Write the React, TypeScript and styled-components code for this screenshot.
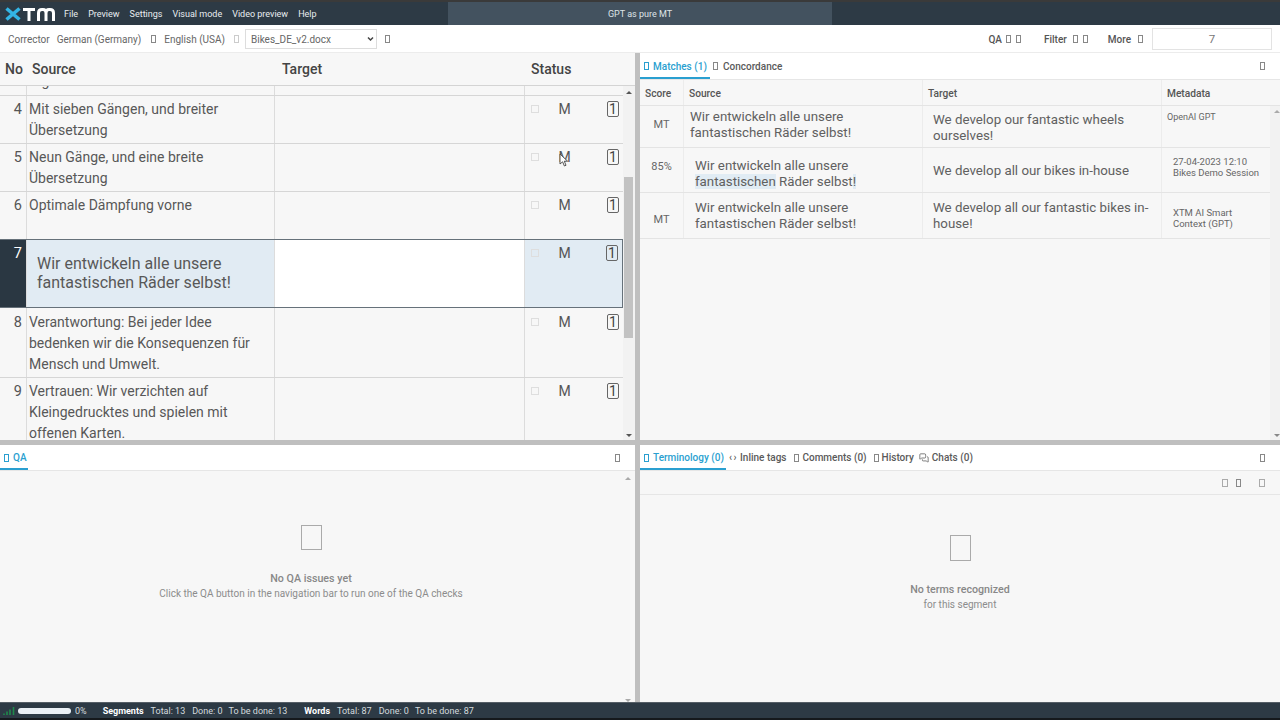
import React from "react";
import styled, { createGlobalStyle } from "styled-components";
import { MessagesSquare } from "lucide-react";

const Global = createGlobalStyle`
  html, body { margin: 0; padding: 0; width: 1280px; height: 720px; overflow: hidden; background: #f7f7f7; }
  body { font-family: Roboto, "Liberation Sans", sans-serif; color: #555; }
  * { box-sizing: border-box; }
`;

const Page = styled.div`
  width: 1280px; height: 720px; display: flex; flex-direction: column; overflow: hidden;
`;

const TopBar = styled.header`
  height: 25px; flex: none; background: #2d3a45; border-top: 2px solid #3a3a3a;
  display: grid; grid-template-columns: 448px 384px 1fr; align-items: stretch;
`;
const BrandMenu = styled.div`display: flex; align-items: center; padding-left: 5px;`;
const Logo = styled.svg`width: 50px; height: 14px; flex: none; margin-right: 9px;`;
const MenuItem = styled.span`
  font-size: 9px; color: #e9edf0; margin-right: 10px; white-space: nowrap;
`;
const DocTitle = styled.div`
  background: #43525f; color: #dfe4e8; font-size: 9px;
  display: flex; align-items: center; justify-content: center;
`;

const Toolbar = styled.div`
  height: 28px; flex: none; background: #fff; border-bottom: 1px solid #ececec;
  display: flex; align-items: center; padding: 1px 8px 0; font-size: 10px;
`;
const ToolText = styled.span<{ $ml?: number }>`
  color: #666; margin-left: ${(p) => p.$ml ?? 0}px; white-space: nowrap;
`;
const ToolAction = styled.span<{ $ml?: number }>`
  color: #555; font-weight: 500; margin-left: ${(p) => p.$ml ?? 0}px; white-space: nowrap;
`;
const Tofu = styled.span<{ $w?: number; $h?: number; $ml?: number; $c?: string }>`
  display: inline-block; flex: none;
  width: ${(p) => p.$w ?? 5}px; height: ${(p) => p.$h ?? 8}px;
  margin-left: ${(p) => p.$ml ?? 0}px;
  border: 1px solid ${(p) => p.$c ?? "#888"};
`;
const SelectWrap = styled.div`position: relative; width: 132px; height: 20px; margin-left: 6px; flex: none;`;
const FileSelect = styled.select`
  appearance: none; width: 100%; height: 100%; border: 1px solid #ddd; background: #fff;
  font: 400 10px Roboto, sans-serif; color: #666; padding-left: 5px; border-radius: 0;
`;
const Chevron = styled.svg`position: absolute; right: 3px; top: 7px; width: 7px; height: 6px; pointer-events: none;`;
const Spacer = styled.div`flex: 1;`;
const SegmentInput = styled.div`
  width: 120px; height: 22px; margin-left: 9px; border: 1px solid #e3e3e3; background: #fff;
  color: #777; font-size: 11.5px; display: flex; align-items: center; justify-content: center;
`;

const Workspace = styled.main`
  flex: 1; min-height: 0; display: grid;
  grid-template-columns: 635px 5px 1fr; grid-template-rows: 387px 5px 1fr;
  background: #bdbdbd;
`;
const Pane = styled.section`
  background: #f7f7f7; min-width: 0; min-height: 0; display: flex; flex-direction: column; overflow: hidden;
`;
const Gutter = styled.div`background: #bfbfbf;`;

const SegHeader = styled.div`
  height: 33px; flex: none; display: grid; grid-template-columns: 27px 248px 250px 1fr;
  align-items: center; border-bottom: 1px solid #d4d4d4; font-size: 14px; font-weight: 500; color: #444;
  background: #f7f7f7;
`;
const SegHeadCell = styled.div<{ $pl: number }>`padding-left: ${(p) => p.$pl}px;`;

const ScrollFrame = styled.div`flex: 1; min-height: 0; display: flex; overflow: hidden;`;
const SegList = styled.div`width: 623px; flex: none; display: flex; flex-direction: column;`;
const Row = styled.div<{ $h: number; $active?: boolean }>`
  height: ${(p) => p.$h}px; flex: none; display: grid;
  grid-template-columns: 27px 248px 250px 1fr; overflow: hidden;
  border-bottom: 1px solid ${(p) => (p.$active ? "#66717a" : "#d6d6d6")};
  ${(p) => p.$active && "border-top: 1px solid #66717a; border-right: 1px solid #66717a; margin-top: -1px;"}
`;
const NoCell = styled.div<{ $active?: boolean; $nudge?: number }>`
  font-size: 14.5px; line-height: 21px; padding: ${(p) => 3 + (p.$nudge ?? 0)}px 4px 0 0; text-align: right;
  color: ${(p) => (p.$active ? "#fff" : "#555")};
  background: ${(p) => (p.$active ? "#2a3742" : "transparent")};
  border-right: 1px solid #dcdcdc;
`;
const SourceCell = styled.div<{ $active?: boolean; $nudge?: number }>`
  font-size: ${(p) => (p.$active ? 16 : 14)}px;
  line-height: ${(p) => (p.$active ? 19 : 21)}px;
  padding: ${(p) => (p.$active ? "14px 8px 0 10px" : `${3 + (p.$nudge ?? 0)}px 8px 0 2px`)};
  color: #585858;
  background: ${(p) => (p.$active ? "#e1ebf3" : "transparent")};
  border-right: 1px solid #dcdcdc;
`;
const ClipCell = styled.div`
  padding-left: 2px; border-right: 1px solid #dcdcdc;
`;
const ClippedSource = styled.div`
  font-size: 14px; line-height: 21px; margin-top: -15px; color: #585858;
`;
const TargetCell = styled.div<{ $active?: boolean }>`
  background: ${(p) => (p.$active ? "#fff" : "transparent")};
  border-right: 1px solid #dcdcdc;
`;
const StatusCell = styled.div<{ $active?: boolean; $nudge?: number }>`
  position: relative; display: grid; grid-template-columns: 22px 33px 1fr 16px; align-items: start;
  padding: ${(p) => 5 + (p.$nudge ?? 0)}px 0 0 6px; background: ${(p) => (p.$active ? "#e1ebf3" : "transparent")};
`;
const CheckBox = styled.span`
  width: 8px; height: 8px; margin-top: 4px; border: 1px solid #dedede; display: block;
`;
const MLetter = styled.span`font-size: 14px; line-height: 17px; color: #555; text-align: center; width: 15px; margin-left: 4px;`;
const CountBadge = styled.span`
  grid-column: 4; width: 12px; height: 16px; border: 1px solid #666; border-radius: 2px;
  font-size: 14px; line-height: 14px; text-align: center; color: #444;
`;
const Cursor = styled.svg`position: absolute; left: 34px; top: 9px; width: 10px; height: 15px;`;

const ScrollTrack = styled.div<{ $plain?: boolean }>`
  flex: 1; position: relative; background: ${(p) => (p.$plain ? "transparent" : "#f2f2f2")};
`;
const Thumb = styled.div`
  position: absolute; left: 1px; top: 91px; width: 9px; height: 161px; background: #c2c2c2;
`;
const Arrow = styled.span<{ $down?: boolean; $top?: number; $bottom?: number; $x: number; $c?: string }>`
  position: absolute; left: ${(p) => p.$x}px;
  ${(p) => (p.$top !== undefined ? `top: ${p.$top}px;` : "")}
  ${(p) => (p.$bottom !== undefined ? `bottom: ${p.$bottom}px;` : "")}
  width: 0; height: 0; border-left: 3px solid transparent; border-right: 3px solid transparent;
  ${(p) => (p.$down ? `border-top: 3px solid ${p.$c ?? "#555"};` : `border-bottom: 3px solid ${p.$c ?? "#555"};`)}
`;

const TabBar = styled.div<{ $h: number }>`
  height: ${(p) => p.$h}px; flex: none; display: flex; align-items: stretch; background: #fff;
  border-bottom: 1px solid #e6e6e6; padding-right: 15px; font-size: 10px;
`;
const Tab = styled.div<{ $active?: boolean; $w?: number; $ml?: number; $gap?: number }>`
  display: flex; align-items: center; gap: ${(p) => p.$gap ?? (p.$active ? 4 : 3)}px; padding-left: ${(p) => (p.$active ? 4 : 0)}px;
  ${(p) => p.$w && `width: ${p.$w}px;`}
  margin-left: ${(p) => p.$ml ?? 0}px; white-space: nowrap;
  color: ${(p) => (p.$active ? "#2a9fd0" : "#5a5a5a")}; font-weight: 500;
  box-shadow: ${(p) => (p.$active ? "inset 0 -2px 0 #2a9fd0" : "none")};
`;
const Brace = styled.span`font-size: 10px; width: 8px; letter-spacing: 1.5px; display: inline-block;`;
const TabEnd = styled.div`margin-left: auto; display: flex; align-items: center;`;

const MatchHead = styled.div`
  height: 26px; flex: none; display: grid; grid-template-columns: 44px 239px 239px 119px;
  border-bottom: 1px solid #e4e4e4; font-size: 10.2px; font-weight: 500; color: #555;
`;
const MatchHeadCell = styled.div`
  padding: 1px 0 0 5px; display: flex; align-items: center; border-right: 1px solid #ececec;
  &:last-child { border-right: none; }
`;
const MatchesFrame = styled.div`flex: 1; display: flex; min-height: 0;`;
const MatchesList = styled.div`width: 630px; flex: none;`;
const MatchRow = styled.div<{ $h: number }>`
  height: ${(p) => p.$h}px; display: grid; grid-template-columns: 44px 239px 239px 108px;
  border-bottom: 1px solid #e4e4e4; font-size: 13.3px; line-height: 16px; color: #606060;
`;
const ScoreCell = styled.div<{ $dy: number }>`
  display: flex; align-items: center; justify-content: center; font-size: 11px; color: #666;
  border-right: 1px solid #ececec;
  padding-bottom: ${(p) => (p.$dy < 0 ? -2 * p.$dy : 0)}px;
  padding-top: ${(p) => (p.$dy > 0 ? 2 * p.$dy : 0)}px;
`;
const TextCell = styled.div<{ $pl: number; $pt: number; $center?: boolean }>`
  padding: ${(p) => p.$pt}px 6px 0 ${(p) => p.$pl}px; border-right: 1px solid #ececec;
  ${(p) => p.$center && "display: flex; align-items: center;"}
`;
const MetaCell = styled.div<{ $pl: number; $pt: number; $small?: boolean }>`
  padding: ${(p) => p.$pt}px 0 0 ${(p) => p.$pl}px;
  font-size: ${(p) => (p.$small ? 9 : 9.5)}px; line-height: 11px; color: #666;
`;
const Mark = styled.span`background: #e1ecf4;`;

const EmptyBody = styled.div`flex: 1; min-height: 0; position: relative; display: flex; flex-direction: column; align-items: center;`;
const BigIcon = styled.span<{ $w: number; $h: number; $mt: number }>`
  display: block; width: ${(p) => p.$w}px; height: ${(p) => p.$h}px; margin-top: ${(p) => p.$mt}px;
  border: 1px solid #aaa;
`;
const EmptyTitle = styled.div`
  margin-top: 22px; font-size: 10.7px; font-weight: 500; line-height: 13px; color: #888;
`;
const EmptySub = styled.div`margin-top: 2px; font-size: 10px; line-height: 13px; color: #8c8c8c;`;
const SubBar = styled.div`
  height: 24px; flex: none; border-bottom: 1px solid #e6e6e6; display: flex; align-items: center;
  justify-content: flex-end; padding-right: 15px;
`;
const LeftScroll = styled.div`width: 13px; flex: none; display: flex;`;

const StatusBar = styled.footer`
  height: 18px; flex: none; background: #2d3a45; border-bottom: 2px solid #15191d; border-top: 1px solid #555e66;
  display: flex; align-items: center; padding-left: 3px; font-size: 9px; color: #d5dade; white-space: nowrap;
`;
const Signal = styled.svg`width: 12px; height: 9px; flex: none;`;
const Progress = styled.div`width: 53px; height: 6px; border-radius: 3px; background: #eaf0f5; margin-left: 3px;`;
const Stat = styled.span<{ $ml: number }>`margin-left: ${(p) => p.$ml}px;`;
const StatLabel = styled.strong<{ $ml: number }>`margin-left: ${(p) => p.$ml}px; color: #fff; font-weight: 700;`;
const ChatGlyph = styled(MessagesSquare)`width: 10px; height: 10px; flex: none; color: #666;`;

const segs = [
  { no: 4, h: 48, text: "Mit sieben Gängen, und breiter Übersetzung" },
  { no: 5, h: 48, text: "Neun Gänge, und eine breite Übersetzung", cursor: true },
  { no: 6, h: 48, text: "Optimale Dämpfung vorne" },
  { no: 7, h: 69, text: "Wir entwickeln alle unsere fantastischen Räder selbst!", active: true },
  { no: 8, h: 70, nudge: 1, text: "Verantwortung: Bei jeder Idee bedenken wir die Konsequenzen für Mensch und Umwelt." },
  { no: 9, h: 69, text: "Vertrauen: Wir verzichten auf Kleingedrucktes und spielen mit offenen Karten." },
];

export default function App() {
  return (
    <Page>
      <Global />
      <TopBar>
        <BrandMenu>
          <Logo viewBox="0 0 50 14" fill="none">
            <path d="M1.5 1.5 L14.5 12.5 M14.5 1.5 L1.5 12.5" stroke="#33b5e5" strokeWidth="3.6" />
            <path d="M18 2.5 H30 M24 2.5 V14" stroke="#fff" strokeWidth="3" />
            <path d="M33.5 14 V6 Q33.5 2.5 37 2.5 H38 Q41 2.5 41 6 V14 M41 6 Q41 2.5 44 2.5 H45 Q48.5 2.5 48.5 6 V14" stroke="#fff" strokeWidth="3" />
          </Logo>
          {["File", "Preview", "Settings", "Visual mode", "Video preview", "Help"].map((m) => (
            <MenuItem key={m}>{m}</MenuItem>
          ))}
        </BrandMenu>
        <DocTitle>GPT as pure MT</DocTitle>
        <div />
      </TopBar>

      <Toolbar>
        <ToolText>Corrector</ToolText>
        <ToolText $ml={7}>German (Germany)</ToolText>
        <Tofu $ml={10} />
        <ToolText $ml={8}>English (USA)</ToolText>
        <Tofu $ml={9} $c="#ccc" />
        <SelectWrap>
          <FileSelect defaultValue="b"><option value="b">Bikes_DE_v2.docx</option></FileSelect>
          <Chevron viewBox="0 0 7 6" fill="none"><path d="M1 1.5 L3.5 4 L6 1.5" stroke="#444" strokeWidth="1.5" /></Chevron>
        </SelectWrap>
        <Tofu $ml={8} />
        <Spacer />
        <ToolAction>QA</ToolAction>
        <Tofu $ml={4} /><Tofu $ml={5} />
        <ToolAction $ml={23}>Filter</ToolAction>
        <Tofu $ml={6} /><Tofu $ml={5} />
        <ToolAction $ml={20}>More</ToolAction>
        <Tofu $ml={7} />
        <SegmentInput>7</SegmentInput>
      </Toolbar>

      <Workspace>
        <Pane>
          <SegHeader>
            <SegHeadCell $pl={5}>No</SegHeadCell>
            <SegHeadCell $pl={5}>Source</SegHeadCell>
            <SegHeadCell $pl={7}>Target</SegHeadCell>
            <SegHeadCell $pl={6}>Status</SegHeadCell>
          </SegHeader>
          <ScrollFrame>
            <SegList>
              <Row $h={10}>
                <NoCell />
                <ClipCell><ClippedSource>Ergebnis.</ClippedSource></ClipCell>
                <TargetCell />
                <div />
              </Row>
              {segs.map((s) => (
                <Row key={s.no} $h={s.h} $active={s.active}>
                  <NoCell $active={s.active} $nudge={s.nudge}>{s.no}</NoCell>
                  <SourceCell $active={s.active} $nudge={s.nudge}>{s.text}</SourceCell>
                  <TargetCell $active={s.active} />
                  <StatusCell $active={s.active} $nudge={s.nudge}>
                    <CheckBox />
                    <MLetter>M</MLetter>
                    <CountBadge>1</CountBadge>
                    {s.cursor && (
                      <Cursor viewBox="0 0 10 15">
                        <path d="M1 1 V11 L3.6 8.8 L5.4 13 L7 12.3 L5.3 8.2 H8.6 Z" fill="#fff" stroke="#444" strokeWidth="0.9" />
                      </Cursor>
                    )}
                  </StatusCell>
                </Row>
              ))}
            </SegList>
            <ScrollTrack>
              <Arrow $x={3} $top={5} />
              <Thumb />
              <Arrow $x={3} $bottom={3} $down />
            </ScrollTrack>
          </ScrollFrame>
        </Pane>
        <Gutter />
        <Pane>
          <TabBar $h={27}>
            <Tab $active $w={70}><Tofu $c="#2a9fd0" />Matches (1)</Tab>
            <Tab $ml={3} $gap={5}><Tofu />Concordance</Tab>
            <TabEnd><Tofu /></TabEnd>
          </TabBar>
          <MatchHead>
            <MatchHeadCell>Score</MatchHeadCell>
            <MatchHeadCell>Source</MatchHeadCell>
            <MatchHeadCell>Target</MatchHeadCell>
            <MatchHeadCell>Metadata</MatchHeadCell>
          </MatchHead>
          <MatchesFrame>
            <MatchesList>
              <MatchRow $h={42}>
                <ScoreCell $dy={-2}>MT</ScoreCell>
                <TextCell $pl={6} $pt={3}>Wir entwickeln alle unsere fantastischen Räder selbst!</TextCell>
                <TextCell $pl={10} $pt={6}>We develop our fantastic wheels ourselves!</TextCell>
                <MetaCell $pl={5} $pt={6} $small>OpenAI GPT</MetaCell>
              </MatchRow>
              <MatchRow $h={45}>
                <ScoreCell $dy={-3}>85%</ScoreCell>
                <TextCell $pl={11} $pt={10}>Wir entwickeln alle unsere <Mark>fantastischen</Mark> Räder selbst<Mark>!</Mark></TextCell>
                <TextCell $pl={10} $pt={1} $center>We develop all our bikes in-house</TextCell>
                <MetaCell $pl={11} $pt={8}>27-04-2023 12:10<br />Bikes Demo Session</MetaCell>
              </MatchRow>
              <MatchRow $h={46}>
                <ScoreCell $dy={4}>MT</ScoreCell>
                <TextCell $pl={11} $pt={7}>Wir entwickeln alle unsere fantastischen Räder selbst!</TextCell>
                <TextCell $pl={10} $pt={7}>We develop all our fantastic bikes in-house!</TextCell>
                <MetaCell $pl={11} $pt={14}>XTM AI Smart<br />Context (GPT)</MetaCell>
              </MatchRow>
            </MatchesList>
            <ScrollTrack>
              <Arrow $x={4} $top={4} $c="#aaa" />
              <Arrow $x={4} $bottom={3} $down $c="#888" />
            </ScrollTrack>
          </MatchesFrame>
        </Pane>

        <Gutter />
        <Gutter />
        <Gutter />

        <Pane>
          <TabBar $h={26}>
            <Tab $active $w={28}><Tofu $c="#2a9fd0" />QA</Tab>
            <TabEnd><Tofu /></TabEnd>
          </TabBar>
          <ScrollFrame>
            <EmptyBody>
              <BigIcon $w={21} $h={25} $mt={54} />
              <EmptyTitle>No QA issues yet</EmptyTitle>
              <EmptySub>Click the QA button in the navigation bar to run one of the QA checks</EmptySub>
            </EmptyBody>
            <LeftScroll>
              <ScrollTrack $plain>
                <Arrow $x={3} $top={6} $c="#aaa" />
                <Arrow $x={3} $bottom={0} $down $c="#aaa" />
              </ScrollTrack>
            </LeftScroll>
          </ScrollFrame>
        </Pane>
        <Gutter />
        <Pane>
          <TabBar $h={26}>
            <Tab $active $w={86}><Tofu $c="#2a9fd0" />Terminology (0)</Tab>
            <Tab $ml={3}><Brace>{"‹›"}</Brace>Inline tags</Tab>
            <Tab $ml={8}><Tofu />Comments (0)</Tab>
            <Tab $ml={7}><Tofu />History</Tab>
            <Tab $ml={5}><ChatGlyph />Chats (0)</Tab>
            <TabEnd><Tofu /></TabEnd>
          </TabBar>
          <SubBar>
            <Tofu $w={6} $c="#aaa" />
            <Tofu $w={5} $ml={8} />
            <Tofu $w={6} $ml={18} $c="#aaa" />
          </SubBar>
          <EmptyBody>
            <BigIcon $w={21} $h={26} $mt={40} />
            <EmptyTitle>No terms recognized</EmptyTitle>
            <EmptySub>for this segment</EmptySub>
          </EmptyBody>
        </Pane>
      </Workspace>

      <StatusBar>
        <Signal viewBox="0 0 12 9">
          <path d="M1 7.5 V9 M4 5.5 V9 M7 3.5 V9 M10.5 1 V9" stroke="#1f8a4c" strokeWidth="1.6" />
        </Signal>
        <Progress />
        <Stat $ml={4}>0%</Stat>
        <StatLabel $ml={16}>Segments</StatLabel>
        <Stat $ml={7}>Total: 13</Stat>
        <Stat $ml={7}>Done: 0</Stat>
        <Stat $ml={6}>To be done: 13</Stat>
        <StatLabel $ml={17}>Words</StatLabel>
        <Stat $ml={7}>Total: 87</Stat>
        <Stat $ml={7}>Done: 0</Stat>
        <Stat $ml={6}>To be done: 87</Stat>
      </StatusBar>
    </Page>
  );
}
